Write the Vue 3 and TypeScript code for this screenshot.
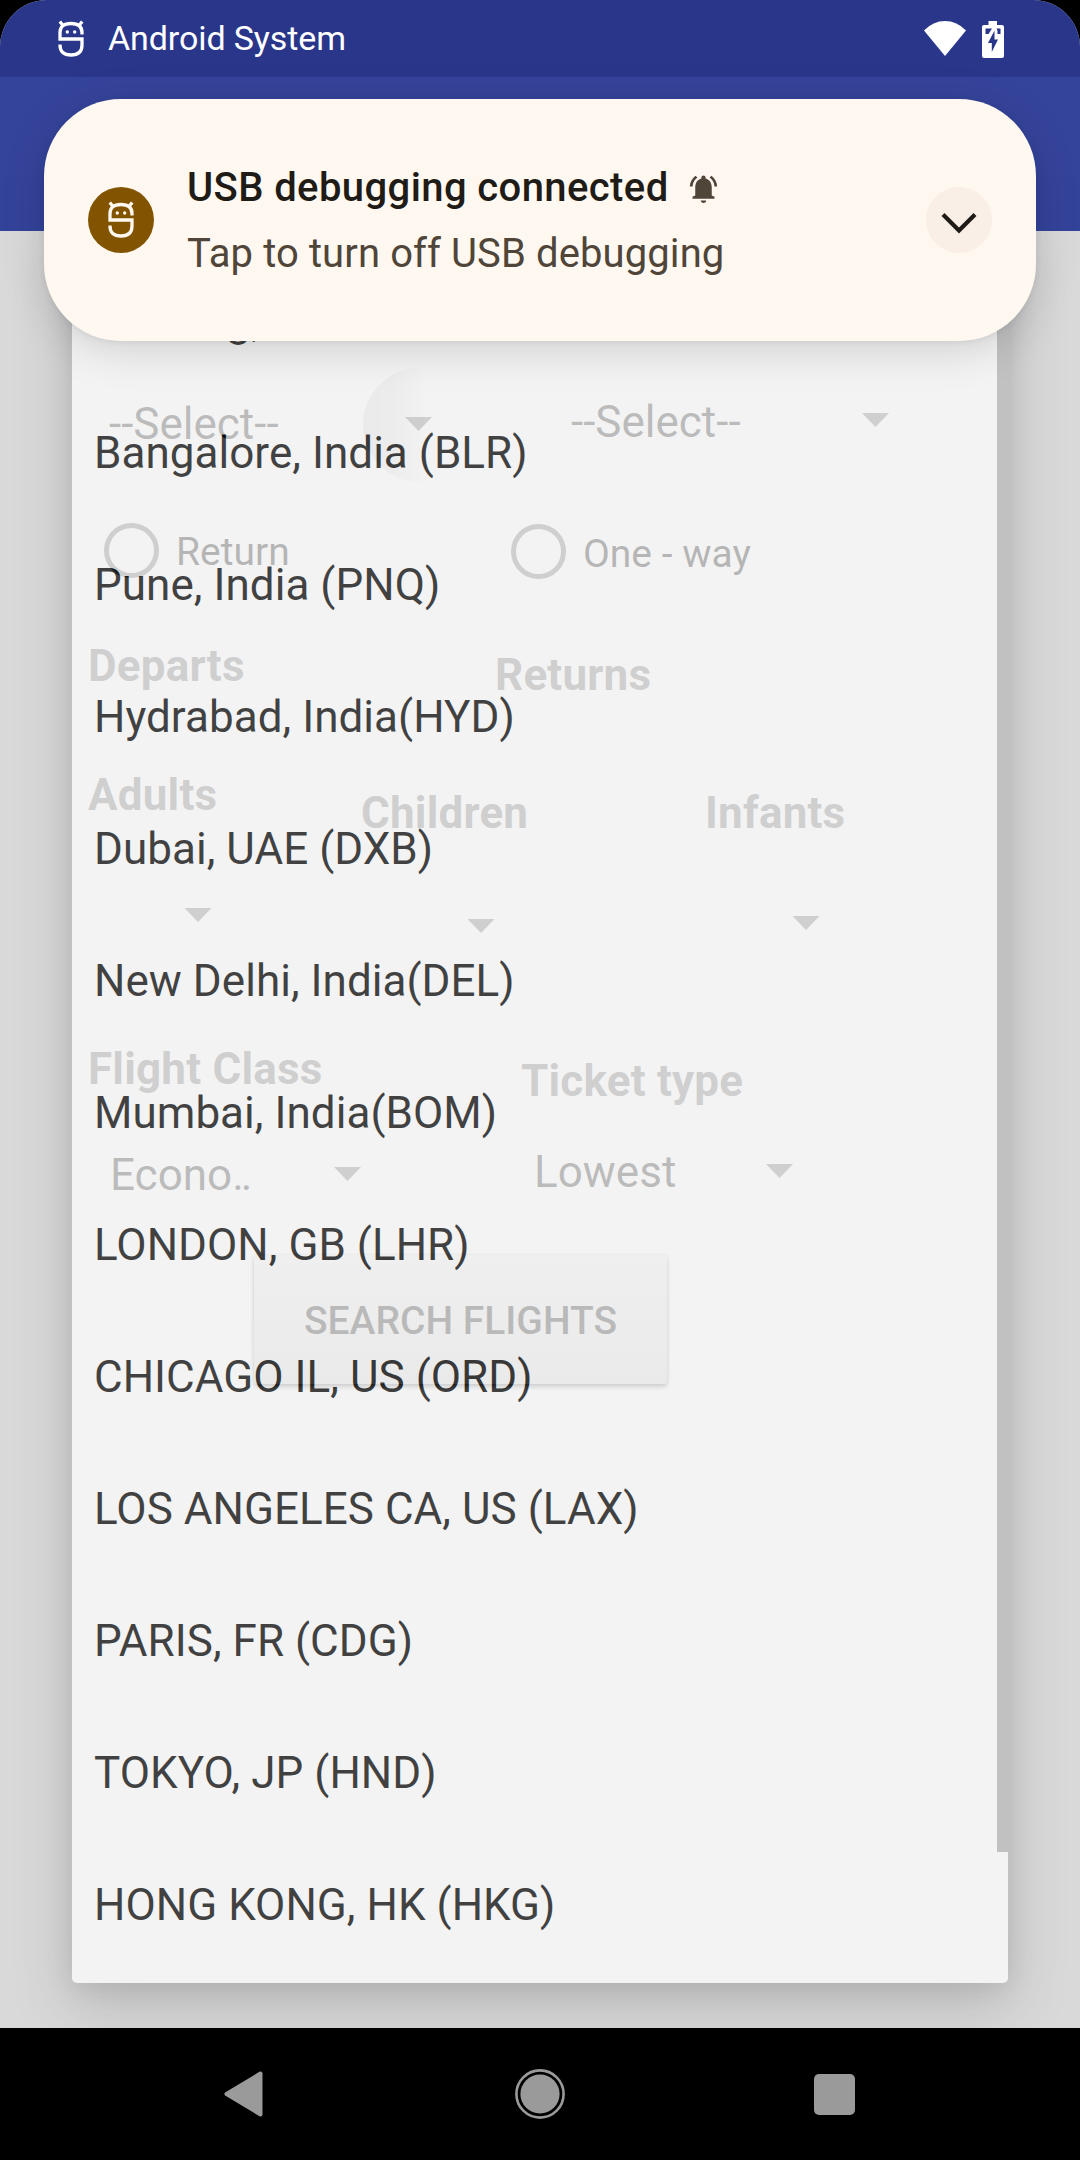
<script setup lang="ts">
const airports: string[] = [
  'Shillong, India',
  'Bangalore, India (BLR)',
  'Pune, India (PNQ)',
  'Hydrabad, India(HYD)',
  'Dubai, UAE (DXB)',
  'New Delhi, India(DEL)',
  'Mumbai, India(BOM)',
  'LONDON, GB (LHR)',
  'CHICAGO IL, US (ORD)',
  'LOS ANGELES CA, US (LAX)',
  'PARIS, FR (CDG)',
  'TOKYO, JP (HND)',
  'HONG KONG, HK (HKG)',
]
</script>

<template>
  <div class="screen">
    <main class="app">
      <header class="status-bar">
        <svg class="status-logo" width="28" height="38" viewBox="0 0 28 38" fill="none" stroke="#fff" stroke-width="3.3">
          <path d="M25 14.5V12.5Q25 3.5 14 3.5T3 12.500V19H25V25Q25 35 14 35T3 25V24.500" />
          <path d="M2.800 1.500L6 5.500M25.200 1.500L22 5.500" />
          <g fill="#fff" stroke="none"><circle cx="10.300" cy="12" r="1.700" /><circle cx="17.700" cy="12" r="1.700" /></g>
        </svg>
        <span class="status-title">Android System</span>
        <svg class="wifi" width="42" height="35" viewBox="0 0 42 35"><path d="M21 35L0 9.500Q9 0 21 0T42 9.500Z" fill="#fff" /></svg>
        <svg class="battery" width="22" height="37" viewBox="0 0 22 37">
          <path fill="#fff" d="M6.500 0H15V4H20Q22 4 22 6V35Q22 37 20 37H2Q0 37 0 35V6Q0 4 2 4H6.500Z" />
          <path fill="#29368a" d="M3.500 7.500H10L6.500 13H3.500ZM14.500 7.500H18.500V13H15.500V10ZM12.500 9.500V18.500H16L9.800 31V22H6Z" />
        </svg>
      </header>
      <div class="app-bar"></div>

      <section class="form">
        <div class="row row-route">
          <div class="field from"><span>--Select--</span><i class="caret"></i><b class="ripple"></b></div>
          <div class="field to"><span>--Select--</span><i class="caret"></i></div>
        </div>
        <div class="row row-trip">
          <div class="radio return"><i></i><span>Return</span></div>
          <div class="radio oneway"><i></i><span>One - way</span></div>
        </div>
        <div class="row row-dates">
          <div class="label departs">Departs</div>
          <div class="label returns">Returns</div>
        </div>
        <div class="row row-people">
          <div class="label adults">Adults</div>
          <div class="label children">Children</div>
          <div class="label infants">Infants</div>
        </div>
        <div class="row row-counts">
          <i class="caret c1"></i><i class="caret c2"></i><i class="caret c3"></i>
        </div>
        <div class="row row-types">
          <div class="label class">Flight Class</div>
          <div class="label ticket">Ticket type</div>
        </div>
        <div class="row row-values">
          <div class="field economy"><span>Econo<em>..</em></span><i class="caret"></i></div>
          <div class="field lowest"><span>Lowest</span><i class="caret"></i></div>
        </div>
        <button class="search">SEARCH FLIGHTS</button>
      </section>

      <div class="popup">
        <ul class="list">
          <li v-for="a in airports" :key="a">{{ a }}</li>
        </ul>
        <div class="scrollbar"></div>
      </div>
    </main>

    <aside class="notice">
      <div class="badge">
        <svg width="28" height="38" viewBox="0 0 28 38" fill="none" stroke="#fef8f1" stroke-width="3.3">
          <path d="M25 14.500V12.500Q25 3.500 14 3.500T3 12.500V19H25V25Q25 35 14 35T3 25V24.500" />
          <path d="M2.800 1.500L6 5.500M25.200 1.500L22 5.500" />
          <g fill="#fef8f1" stroke="none"><circle cx="10.300" cy="12" r="1.700" /><circle cx="17.700" cy="12" r="1.700" /></g>
        </svg>
      </div>
      <div class="notice-text">
        <div class="notice-head">
          <span class="notice-title">USB debugging connected</span>
          <svg class="bell" width="33" height="33" viewBox="0 0 24 24" fill="#4f4539">
            <path d="M7.580 4.080L6.150 2.650C3.750 4.480 2.170 7.300 2.030 10.500h2c.15-2.650 1.510-4.970 3.550-6.420zM19.970 10.500h2c-.15-3.200-1.730-6.020-4.120-7.850l-1.420 1.430c2.020 1.450 3.390 3.770 3.540 6.420zM18 11c0-3.070-1.640-5.640-4.500-6.320V4c0-.83-.67-1.500-1.500-1.500s-1.500.67-1.500 1.500v.68C7.630 5.360 6 7.920 6 11v6l-2 1v1.500h16V18l-2-1zM12 22.500c1.100 0 2-.8 2-1.700h-4c0 .9.900 1.700 2 1.700z" />
          </svg>
        </div>
        <div class="notice-body">Tap to turn off USB debugging</div>
      </div>
      <div class="expand">
        <svg width="36" height="22" viewBox="0 0 36 22" fill="none" stroke="#1f1b16" stroke-width="4.200"><path d="M2 2.500L18 18.500L34 2.500" /></svg>
      </div>
    </aside>

    <nav class="nav">
      <svg width="39" height="46" viewBox="0 0 39 46"><path d="M2.500 23L36.500 2.500V43.500Z" fill="#9a9a9a" stroke="#9a9a9a" stroke-width="4" stroke-linejoin="round" /></svg>
      <svg class="home" width="50" height="50" viewBox="0 0 50 50"><circle cx="25" cy="25" r="23.600" fill="none" stroke="#9a9a9a" stroke-width="2.600" /><circle cx="25" cy="25" r="19.600" fill="#9a9a9a" /></svg>
      <div class="recent"></div>
    </nav>
  </div>
</template>

<style>
body {
  background: #000;
}
</style>

<style scoped>
.screen {
  position: relative;
  width: 1080px;
  height: 2160px;
  overflow: hidden;
  background: #000;
  font-family: Roboto, sans-serif;
  display: flex;
  flex-direction: column;
}
.app {
  position: relative;
  height: 2028px;
  flex: none;
  overflow: hidden;
  border-radius: 47px 47px 0 0;
  background: #d9d9d9;
}
.status-bar {
  height: 77px;
  box-sizing: border-box;
  background: #29368a;
  display: flex;
  align-items: flex-start;
  padding-left: 57px;
  color: #fff;
}
.status-logo {
  margin-top: 20px;
}
.status-title {
  margin-left: 23px;
  width: 240px;
  font-size: 34px;
  line-height: 40px;
  margin-top: 18px;
  letter-spacing: -0.1px;
  white-space: nowrap;
}
.wifi {
  margin: 21px 0 0 576px;
}
.battery {
  margin: 21px 0 0 16px;
}
.app-bar {
  height: 154px;
  background: #35449b;
}
.row {
  display: flex;
  align-items: flex-start;
  box-sizing: border-box;
}
.caret {
  display: block;
  width: 27px;
  height: 14px;
  background: #5f5f5f;
  clip-path: polygon(0 0, 100% 0, 50% 100%);
}
.field {
  position: relative;
  display: flex;
  align-items: flex-start;
  font-size: 44px;
  line-height: 52px;
  color: #1a1a1a;
}
.field .caret {
  margin-top: 18px;
}
.field span {
  white-space: nowrap;
}
.field em {
  font-style: normal;
  letter-spacing: -3px;
}
.row-route {
  height: 290px;
  padding-top: 165px;
}
.from {
  margin: 2px 0 0 109px;
}
.from span {
  width: 296px;
}
.from .caret {
  margin-top: 19px;
}
.ripple {
  position: absolute;
  left: 254px;
  top: -30px;
  width: 66px;
  height: 114px;
  border-radius: 57px 0 0 57px;
  background: linear-gradient(90deg, rgba(0, 0, 0, 0.14), rgba(0, 0, 0, 0.11) 45%, transparent);
}
.to {
  margin-left: 139px;
}
.to span {
  width: 291px;
}
.to .caret {
  margin-top: 17px;
}
.row-trip {
  height: 119px;
}
.radio {
  display: flex;
  align-items: flex-start;
  font-size: 39px;
  line-height: 46px;
  color: #080808;
}
.radio i {
  width: 45px;
  height: 45px;
  border: 5px solid #5f5f5f;
  border-radius: 50%;
}
.radio span {
  white-space: nowrap;
}
.return {
  margin: 2px 0 0 104px;
  width: 407px;
}
.return span {
  margin: 6px 0 0 17px;
}
.oneway {
  margin-top: 3px;
}
.oneway span {
  margin: 7px 0 0 17px;
}
.label {
  font-size: 44px;
  line-height: 52px;
  font-weight: 700;
  letter-spacing: 0.2px;
  color: #5f5f5f;
  white-space: nowrap;
}
.row-dates {
  height: 129px;
}
.departs {
  margin-left: 88px;
  width: 407px;
}
.returns {
  margin-top: 9px;
}
.row-people {
  height: 139px;
}
.adults {
  margin-left: 88px;
  width: 273px;
}
.children {
  margin-top: 18px;
  width: 344px;
}
.infants {
  margin-top: 18px;
}
.row-counts {
  height: 135px;
}
.c1 {
  margin-left: 184.5px;
}
.c2 {
  margin: 11px 0 0 256px;
}
.c3 {
  margin: 8px 0 0 298px;
}
.row-types {
  height: 103px;
}
.class {
  margin-left: 88px;
  width: 433px;
}
.ticket {
  margin-top: 12px;
}
.row-values {
  height: 109px;
}
.economy {
  margin: 3px 0 0 110px;
}
.economy span {
  width: 224px;
}
.lowest {
  margin-left: 173px;
}
.lowest span {
  width: 232px;
}
.search {
  display: block;
  margin-left: 254px;
  width: 413px;
  height: 129px;
  border: 0;
  border-radius: 4px;
  padding: 3px 0 0;
  background: linear-gradient(#cbcbcb, #bababa);
  box-shadow: 0 3px 4px rgba(0, 0, 0, 0.5), 0 0 3px rgba(0, 0, 0, 0.25);
  font: 500 39px/126px Roboto, sans-serif;
  color: #141414;
}
.popup {
  position: absolute;
  left: 72px;
  top: 243px;
  width: 936px;
  height: 1740px;
  box-sizing: border-box;
  padding-top: 12px;
  display: flex;
  background: #fff;
  opacity: 0.7;
  border-radius: 5px;
  box-shadow: 0 22px 60px rgba(0, 0, 0, 0.22), 0 4px 26px rgba(0, 0, 0, 0.12);
}
.list {
  list-style: none;
  margin: 0;
  padding: 0;
  width: 925px;
}
.list li {
  height: 132px;
  line-height: 132px;
  padding-left: 22px;
  font-size: 44px;
  letter-spacing: 0.04px;
  color: #010101;
  white-space: nowrap;
}
.scrollbar {
  width: 11px;
  height: 1597px;
  background: #b7b7b7;
}
.notice {
  position: absolute;
  left: 44px;
  top: 99px;
  width: 992px;
  height: 242px;
  box-sizing: border-box;
  padding: 0 44px;
  display: flex;
  align-items: center;
  background: #fef8f1;
  border-radius: 77px;
  box-shadow: 0 8px 44px rgba(0, 0, 0, 0.15), 0 2px 6px rgba(0, 0, 0, 0.06);
}
.badge {
  width: 66px;
  height: 66px;
  border-radius: 50%;
  background: #835400;
  display: flex;
  align-items: center;
  justify-content: center;
  flex: none;
}
.notice-text {
  margin-left: 33px;
  flex: 1;
  white-space: nowrap;
}
.notice-head {
  display: flex;
  align-items: center;
  height: 66px;
}
.notice-title {
  width: 500px;
  font-size: 40px;
  font-weight: 500;
  letter-spacing: 0.4px;
  color: #1f1b16;
}
.notice-body {
  height: 66px;
  line-height: 68px;
  font-size: 40px;
  letter-spacing: 0.1px;
  color: #4f4539;
}
.bell {
  flex: none;
  margin-top: 3px;
}
.expand {
  width: 66px;
  height: 66px;
  border-radius: 50%;
  background: #f9efe7;
  display: flex;
  align-items: center;
  justify-content: center;
}
.expand svg {
  margin-top: 5px;
}
.nav {
  height: 132px;
  display: flex;
  align-items: center;
  padding-left: 224px;
}
.home {
  margin-left: 252px;
}
.recent {
  margin-left: 249px;
  width: 41px;
  height: 41px;
  border-radius: 5px;
  background: #9a9a9a;
}
</style>
